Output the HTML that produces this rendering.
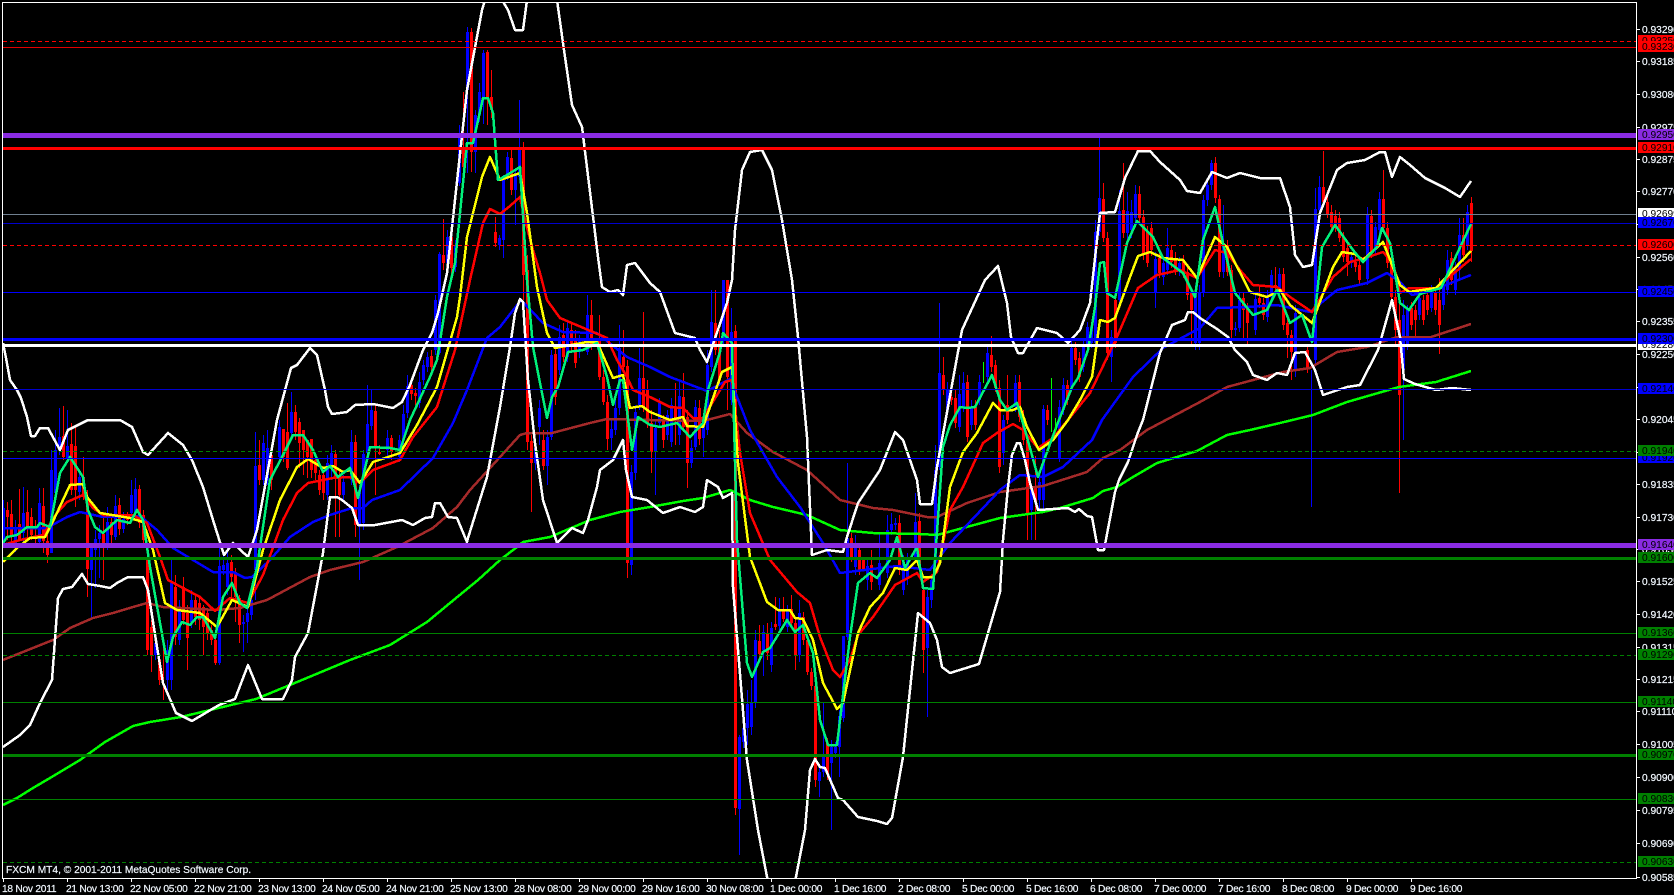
<!DOCTYPE html>
<html>
<head>
<meta charset="utf-8">
<title>FXCM MT4 chart</title>
<style>
html,body{margin:0;padding:0;background:#000;width:1674px;height:895px;overflow:hidden}
svg{display:block}
text{font-family:"Liberation Sans",sans-serif;font-size:10.2px}
.c{fill:none;stroke-width:2.5;shape-rendering:crispEdges;stroke-linejoin:round}
.w{fill:none;stroke-width:1;shape-rendering:crispEdges}
.b{fill:none;stroke-width:3;shape-rendering:crispEdges}
.h{shape-rendering:crispEdges;stroke-width:1}
.t text{fill:#f2f8ff;stroke:#f2f8ff;stroke-width:.2px}
.k{fill:#000}
</style>
</head>
<body>
<svg width="1674" height="895" viewBox="0 0 1674 895" xmlns="http://www.w3.org/2000/svg">
<defs><clipPath id="cp"><rect x="3" y="3" width="1633" height="875"/></clipPath></defs>
<rect width="1674" height="895" fill="#000"/>
<g clip-path="url(#cp)">
<!-- wicks -->
<path class="w" stroke="#0000ff" d="M3.5 500V548M15.5 520V552M23.5 487V543M39.5 488V545M51.5 450V553M55.5 430V500M59.5 408V455M67.5 410V462M79.5 470V500M91.5 545V618M95.5 530V588M99.5 525V578M107.5 507V550M115.5 495V540M123.5 512V533M131.5 480V518M135.5 478V518M155.5 635V660M167.5 640V690M171.5 560V690M179.5 600V645M191.5 590V628M219.5 540V665M223.5 553V575M227.5 545V595M243.5 615V652M247.5 605V643M251.5 590V620M255.5 432V600M263.5 435V485M267.5 430V485M279.5 420V462M291.5 392V440M327.5 455V500M331.5 445V480M343.5 475V500M351.5 430V485M359.5 485V580M363.5 450V530M367.5 385V458M371.5 390V430M387.5 430V458M399.5 435V462M403.5 405V445M407.5 375V418M419.5 372V408M423.5 360V385M427.5 352V372M435.5 295V355M439.5 252V355M447.5 230V268M455.5 240V272M459.5 125V186M467.5 27V173M475.5 110V173M479.5 83V122M483.5 50V124M499.5 235V250M503.5 175V258M507.5 152V180M515.5 168V225M519.5 100V180M535.5 445V470M539.5 400V445M547.5 430V485M551.5 350V440M559.5 325V375M567.5 322V362M579.5 335V358M587.5 295V355M611.5 420V450M615.5 400V435M619.5 325V415M631.5 465V575M635.5 405V480M639.5 348V410M655.5 420V495M659.5 398V428M667.5 410V440M671.5 398V447M679.5 382V445M691.5 440V468M695.5 400V450M703.5 420V457M707.5 350V435M711.5 290V372M723.5 290V345M731.5 308V405M739.5 735V855M743.5 720V748M747.5 690V745M751.5 680V735M755.5 630V708M763.5 625V676M771.5 622V672M779.5 598V630M787.5 605V632M799.5 600V662M819.5 768V797M823.5 703V777M831.5 740V830M835.5 742V758M839.5 710V777M843.5 683V722M847.5 463V640M855.5 535V575M867.5 560V590M879.5 533V590M887.5 515V578M891.5 513V535M895.5 518V530M903.5 555V595M907.5 553V585M915.5 493V562M927.5 590V717M931.5 575V608M935.5 445V560M939.5 303V470M947.5 382V415M959.5 375V432M963.5 372V412M971.5 400V430M979.5 375V405M987.5 347V382M1003.5 415V465M1015.5 375V412M1031.5 485V540M1039.5 478V510M1043.5 405V510M1059.5 400V462M1063.5 378V415M1071.5 340V392M1083.5 340V372M1087.5 322V350M1091.5 322V348M1095.5 220V348M1099.5 138V236M1111.5 330V382M1119.5 190V305M1127.5 192V240M1131.5 200V238M1135.5 185V224M1155.5 252V308M1163.5 258V285M1167.5 228V275M1179.5 257V276M1195.5 285V350M1199.5 285V350M1203.5 195V297M1207.5 178V206M1211.5 160V190M1223.5 205V278M1235.5 322V336M1239.5 292V332M1255.5 292V335M1267.5 290V322M1271.5 270V302M1279.5 268V298M1295.5 305V377M1311.5 370V507M1315.5 188V365M1319.5 176V215M1351.5 252V268M1367.5 207V285M1375.5 222V255M1379.5 192V236M1403.5 300V440M1407.5 305V350M1419.5 292V320M1431.5 285V312M1443.5 278V310M1447.5 250V295M1455.5 262V295M1459.5 218V280M1467.5 205V250"/>
<path class="w" stroke="#ff0000" d="M7.5 502V540M11.5 500V542M19.5 489V540M27.5 490V537M31.5 508V540M35.5 520V545M43.5 488V553M47.5 535V563M63.5 406V460M71.5 423V495M75.5 425V507M83.5 457V500M87.5 490V597M103.5 512V580M111.5 515V545M119.5 498V535M127.5 512V525M139.5 485V528M143.5 510V545M147.5 555V655M151.5 620V672M159.5 655V685M163.5 640V700M175.5 575V645M183.5 577V625M187.5 605V670M195.5 595V625M199.5 598V630M203.5 605V655M207.5 610V640M211.5 625V645M215.5 630V665M231.5 555V600M235.5 568V622M239.5 595V643M259.5 440V485M271.5 450V490M283.5 430V462M287.5 403V470M295.5 405V440M299.5 418V468M303.5 430V475M307.5 440V478M311.5 440V478M315.5 455V480M319.5 470V495M323.5 470V500M335.5 450V537M339.5 470V537M355.5 435V537M375.5 405V495M379.5 445V455M391.5 435V460M411.5 378V400M415.5 388V405M431.5 350V372M443.5 219V270M451.5 232V278M463.5 92V172M471.5 28V172M487.5 50V125M491.5 70V118M495.5 217V247M511.5 150V195M523.5 142V300M527.5 255V450M531.5 435V512M543.5 430V470M555.5 345V405M563.5 323V362M571.5 322V352M575.5 330V368M591.5 300V350M599.5 315V380M603.5 370V405M607.5 395V450M623.5 330V372M627.5 360V578M643.5 312V412M647.5 380V428M651.5 410V473M663.5 415V448M675.5 383V445M683.5 373V432M687.5 410V488M699.5 400V445M715.5 290V355M719.5 330V385M727.5 280V410M735.5 325V815M759.5 625V660M767.5 623V660M775.5 597V630M783.5 597V622M791.5 595V628M795.5 618V670M803.5 612V645M807.5 635V675M811.5 668V690M815.5 680V787M827.5 738V780M851.5 533V562M859.5 545V575M871.5 550V590M899.5 515V575M919.5 513V572M923.5 585V673M943.5 357V395M951.5 383V405M955.5 390V428M967.5 375V442M975.5 400V430M991.5 336V372M995.5 360V392M999.5 380V473M1007.5 375V424M1019.5 375V422M1023.5 410V445M1027.5 435V540M1035.5 456V540M1047.5 405V425M1067.5 380V405M1075.5 342V365M1079.5 352V382M1103.5 183V242M1107.5 232V360M1115.5 295V348M1123.5 163V238M1139.5 186V222M1143.5 210V260M1147.5 226V267M1151.5 222V256M1159.5 252V278M1171.5 245V268M1175.5 252V275M1183.5 255V278M1187.5 266V300M1191.5 288V345M1215.5 157V203M1219.5 195V277M1227.5 240V276M1231.5 265V342M1243.5 292V340M1247.5 303V345M1259.5 285V308M1263.5 298V320M1275.5 267V292M1283.5 268V330M1287.5 318V358M1291.5 330V380M1307.5 345V373M1323.5 151V206M1327.5 190V218M1331.5 205V232M1335.5 210V232M1339.5 212V242M1343.5 232V262M1347.5 243V276M1355.5 256V272M1359.5 260V285M1371.5 210V258M1383.5 170V232M1387.5 222V268M1391.5 256V302M1395.5 290V345M1399.5 300V493M1411.5 302V330M1415.5 305V340M1423.5 295V325M1427.5 290V315M1435.5 287V315M1439.5 278V354M1451.5 252V285M1463.5 218V262M1471.5 197V262"/>
<path class="w" stroke="#00ff00" d="M983.5 362V383M1051.5 378V432M1055.5 418V432"/>
<!-- bodies -->
<path class="b" stroke="#0000ff" d="M3.5 508V543M15.5 527V547M23.5 513V533M39.5 503V542M51.5 470V553M55.5 450V493M59.5 437V450M67.5 446V458M79.5 477V492M91.5 548V570M95.5 539V550M99.5 533V539M107.5 522V543M115.5 506V537M123.5 519V529M131.5 495V513M135.5 489V513M155.5 643V655M167.5 650V680M171.5 583V680M179.5 610V640M191.5 600V622M219.5 566V663M223.5 565V570M227.5 563V587M243.5 622V624M247.5 613V622M251.5 600V615M255.5 466V570M263.5 443V480M267.5 448V480M279.5 427V457M291.5 412V433M327.5 463V495M331.5 453V465M343.5 482V495M351.5 442V480M359.5 490V525M363.5 454V523M367.5 424V453M371.5 410V426M387.5 438V450M399.5 440V457M403.5 414V440M407.5 386V413M419.5 382V403M423.5 365V380M427.5 357V367M435.5 300V350M439.5 254V353M447.5 237V263M455.5 245V267M459.5 138V183M467.5 32V90M475.5 115V152M479.5 92V115M483.5 53V97M499.5 238V245M503.5 180V240M507.5 157V177M515.5 173V190M519.5 150V177M535.5 448V463M539.5 408V427M547.5 437V466M551.5 355V437M559.5 337V370M567.5 328V357M579.5 340V352M587.5 315V352M611.5 429V438M615.5 408V430M619.5 348V408M631.5 472V565M635.5 412V473M639.5 378V405M655.5 428V451M659.5 403V423M667.5 415V435M671.5 405V442M679.5 396V435M691.5 448V463M695.5 407V447M703.5 423V438M707.5 365V430M711.5 322V367M723.5 280V340M731.5 332V400M739.5 737V809M743.5 728V742M747.5 704V728M751.5 703V727M755.5 640V703M763.5 632V650M771.5 628V665M779.5 610V626M787.5 610V627M799.5 613V655M819.5 772V781M823.5 757V772M831.5 747V763M835.5 747V753M839.5 716V747M843.5 636V718M847.5 538V637M855.5 547V567M867.5 566V580M879.5 563V585M887.5 530V573M891.5 524V530M895.5 523V525M903.5 563V590M907.5 560V577M915.5 522V557M927.5 597V648M931.5 580V600M935.5 470V557M939.5 373V467M947.5 390V410M959.5 394V427M963.5 383V407M971.5 407V425M979.5 382V400M987.5 353V377M1003.5 420V453M1015.5 383V407M1031.5 490V510M1039.5 482V500M1043.5 409V500M1059.5 407V458M1063.5 385V410M1071.5 348V387M1083.5 347V367M1087.5 327V347M1091.5 327V343M1095.5 232V343M1099.5 198V232M1111.5 337V357M1119.5 211V300M1127.5 211V233M1131.5 212V230M1135.5 194V218M1155.5 259V293M1163.5 263V277M1167.5 248V270M1179.5 263V270M1195.5 293V343M1199.5 293V343M1203.5 200V293M1207.5 185V200M1211.5 163V185M1223.5 243V272M1235.5 328V330M1239.5 300V328M1255.5 299V330M1267.5 297V317M1271.5 275V297M1279.5 274V292M1295.5 313V370M1315.5 209V360M1319.5 187V210M1351.5 257V263M1367.5 215V279M1375.5 227V250M1379.5 199V230M1403.5 315V370M1407.5 310V345M1419.5 298V315M1431.5 292V308M1443.5 285V305M1447.5 260V290M1455.5 270V290M1459.5 235V270M1467.5 212V245"/>
<path class="b" stroke="#ff0000" d="M7.5 510V517M11.5 514V537M19.5 524V540M27.5 512V528M31.5 517V535M43.5 506V541M47.5 541V555M63.5 436V457M71.5 444V490M75.5 446V490M83.5 477V497M87.5 497V569M103.5 534V543M111.5 522V535M119.5 505V529M127.5 518V520M139.5 489V523M143.5 515V540M147.5 560V650M151.5 627V655M159.5 660V680M175.5 587V637M183.5 587V620M187.5 613V638M195.5 600V617M199.5 603V620M203.5 607V627M207.5 613V633M211.5 630V640M215.5 640V663M231.5 562V577M235.5 572V597M239.5 598V625M259.5 465V480M271.5 455V480M283.5 429V457M287.5 432V468M295.5 412V432M299.5 422V443M303.5 430V450M307.5 440V457M311.5 439V470M315.5 460V473M319.5 475V490M323.5 475V493M335.5 454V477M339.5 477V495M355.5 442V525M375.5 411V448M379.5 452V454M391.5 438V452M411.5 385V394M415.5 393V396M431.5 356V367M443.5 255V263M451.5 237V268M463.5 147V167M471.5 32V152M487.5 52V98M491.5 97V110M495.5 232V243M511.5 158V190M523.5 150V275M527.5 270V442M531.5 441V463M543.5 440V466M555.5 354V397M563.5 335V357M571.5 330V347M575.5 338V363M591.5 315V345M599.5 338V377M603.5 377V402M607.5 402V439M623.5 357V367M627.5 366V563M643.5 378V407M647.5 390V423M651.5 423V452M663.5 420V440M675.5 407V420M683.5 397V427M687.5 417V463M699.5 408V439M715.5 323V350M719.5 340V380M727.5 280V377M735.5 331V808M759.5 641V654M767.5 634V653M775.5 624V627M783.5 610V619M791.5 609V623M795.5 623V655M803.5 617V640M807.5 640V672M811.5 672V686M815.5 686V780M827.5 743V774M851.5 538V557M859.5 550V570M863.5 560V570M871.5 565V582M899.5 523V570M919.5 521V567M923.5 590V650M943.5 375V390M951.5 397V400M955.5 398V423M967.5 382V437M975.5 407V425M991.5 355V367M995.5 365V388M999.5 388V467M1007.5 405V420M1019.5 382V417M1023.5 417V440M1027.5 440V515M1035.5 488V502M1047.5 410V420M1067.5 385V400M1075.5 348V360M1079.5 358V377M1103.5 199V238M1107.5 238V353M1115.5 300V343M1123.5 210V233M1139.5 194V218M1143.5 217V255M1147.5 232V263M1151.5 228V250M1159.5 258V273M1171.5 250V262M1175.5 258V270M1183.5 260V273M1187.5 272V295M1191.5 293V310M1215.5 163V198M1219.5 199V272M1227.5 245V272M1231.5 270V330M1243.5 298V310M1247.5 307V323M1259.5 298V303M1263.5 303V315M1275.5 285V287M1283.5 274V325M1287.5 323V335M1291.5 335V352M1307.5 350V368M1323.5 187V202M1327.5 202V215M1331.5 212V227M1335.5 216V227M1339.5 218V238M1343.5 237V257M1347.5 248V262M1355.5 262V267M1359.5 265V280M1371.5 216V253M1383.5 199V228M1387.5 228V263M1391.5 262V297M1395.5 297V330M1399.5 320V395M1411.5 308V325M1415.5 310V320M1423.5 300V320M1427.5 295V310M1435.5 292V310M1439.5 300V325M1451.5 258V280M1463.5 235V255M1471.5 203V251"/>
<!-- brown -->
<polyline class="c" stroke="#a52a2a" points="3,660 53,640 70,628 93,618 113,613 133,607 147,603 163,607 217,610 240,608 267,600 310,577 330,570 363,562 397,547 433,528 457,507 470,490 520,435 527,433 552,433 590,423 607,419 650,420 703,421 730,414 747,433 773,452 807,470 840,500 873,508 893,510 927,517 937,517 967,503 1000,492 1043,486 1087,472 1103,458 1120,450 1147,430 1200,402 1227,387 1283,372 1310,368 1337,352 1367,347 1397,337 1431,337 1471,324"/>
<!-- green 200 -->
<polyline class="c" stroke="#00ff00" points="3,805 17,798 33,788 50,778 80,760 105,742 133,726 150,722 181,717 256,699 302,680 350,660 390,645 427,622 450,603 478,580 500,560 517,547 523,542 550,537 590,520 620,512 650,507 683,501 703,498 730,490 750,500 773,507 807,515 840,530 873,533 920,534 937,535 963,528 1000,518 1043,512 1060,508 1093,498 1103,491 1117,487 1133,477 1157,463 1197,451 1227,435 1250,430 1280,423 1313,415 1347,402 1399,387 1436,382 1471,371"/>
<!-- blue ema -->
<polyline class="c" stroke="#0000ff" points="3,528 47,528 67,517 80,512 103,517 140,516 157,530 173,548 193,560 213,572 233,572 245,578 252,577 270,560 290,537 313,522 330,515 352,508 363,508 372,500 400,490 433,458 453,423 467,390 487,338 500,327 521,300 543,323 563,332 597,333 627,357 650,367 670,377 707,391 730,379 750,430 777,477 800,507 823,543 840,573 897,566 930,570 950,543 1000,490 1020,475 1043,477 1063,467 1092,440 1102,420 1133,377 1163,348 1200,328 1217,308 1247,307 1277,305 1310,312 1337,290 1367,283 1387,273 1400,282 1412,295 1431,291 1471,275"/>
<!-- red ema -->
<polyline class="c" stroke="#ff0000" points="3,545 20,540 43,535 57,513 67,502 83,495 93,508 103,515 133,515 147,523 160,557 168,580 183,588 200,597 215,611 230,598 248,603 263,575 283,520 297,493 308,483 333,478 350,477 360,483 373,470 400,460 413,437 437,407 455,350 470,280 483,223 490,209 500,214 510,206 520,197 525,220 533,250 540,273 547,300 560,318 593,332 607,338 617,360 627,377 633,390 650,397 670,407 683,408 693,418 703,418 725,382 732,380 740,453 750,513 770,560 797,592 810,603 820,637 833,670 840,677 850,660 858,635 873,617 895,585 917,573 923,582 937,572 950,510 963,487 983,443 997,433 1013,424 1023,430 1038,448 1053,438 1072,415 1090,393 1117,337 1138,288 1157,275 1180,270 1197,278 1215,250 1227,253 1240,270 1253,285 1277,287 1290,297 1312,312 1333,277 1350,262 1365,258 1383,252 1393,263 1400,293 1409,288 1436,288 1471,259"/>
<!-- yellow -->
<polyline class="c" stroke="#ffff00" points="3,562 17,548 30,538 45,537 55,517 70,485 83,484 87,497 100,513 130,518 143,522 153,550 165,603 177,610 200,613 217,627 232,600 248,607 263,550 280,500 297,467 308,459 323,468 333,466 343,472 350,470 360,483 373,462 400,453 417,425 437,387 457,317 460,297 467,237 482,177 490,157 500,180 520,173 527,213 537,287 547,333 555,348 587,342 597,342 613,378 623,375 630,408 642,406 650,412 670,420 683,417 687,426 703,427 722,372 732,367 738,463 750,557 767,602 778,610 790,610 795,618 803,619 813,640 823,683 837,709 843,703 858,633 870,607 883,593 895,568 907,570 917,560 923,577 933,577 940,563 950,487 963,452 977,433 993,403 1000,410 1013,410 1020,407 1027,427 1039,450 1053,440 1068,420 1080,400 1092,377 1100,320 1108,322 1115,318 1130,277 1138,256 1150,252 1163,258 1183,260 1197,278 1215,237 1227,247 1250,292 1267,297 1280,290 1290,305 1312,323 1333,267 1342,252 1355,254 1363,260 1383,242 1400,285 1409,292 1436,288 1471,251"/>
<!-- spring green -->
<polyline class="c" stroke="#00f07a" points="3,543 7,537 17,535 27,527 37,527 40,523 50,527 60,473 70,457 83,477 88,510 95,527 103,533 117,520 130,523 137,510 143,520 150,567 167,662 173,637 182,622 190,625 197,617 203,617 215,638 223,597 232,583 240,603 247,608 257,567 270,480 283,455 293,435 303,435 313,450 323,472 330,466 338,477 350,468 358,498 370,447 390,448 400,450 410,420 430,377 437,360 447,297 455,263 467,143 473,143 483,98 488,98 493,113 498,180 507,175 520,167 527,280 533,347 540,383 547,418 552,397 558,387 568,352 583,350 597,343 607,377 613,405 620,380 623,380 632,450 638,417 650,425 660,427 677,423 690,437 703,423 708,390 720,352 723,333 732,343 737,540 740,577 747,663 752,677 763,652 770,648 787,620 795,632 803,625 813,653 820,720 828,745 837,745 850,637 858,583 870,573 877,578 890,560 897,537 905,568 917,547 923,588 933,589 943,447 950,425 960,407 967,408 975,407 992,375 1000,400 1007,410 1017,403 1025,430 1038,477 1043,463 1057,425 1072,387 1078,378 1088,350 1095,307 1100,263 1104,262 1107,293 1115,298 1127,243 1137,221 1153,237 1163,258 1183,273 1195,297 1203,240 1215,207 1223,243 1235,293 1253,315 1267,310 1277,290 1290,323 1302,315 1312,342 1322,247 1335,225 1353,250 1363,262 1377,247 1382,228 1390,243 1400,303 1409,310 1420,294 1441,288 1471,224"/>
<!-- white upper band -->
<polyline class="c" stroke="#ffffff" points="3,343 6,358 10,380 17,390 21,398 27,417 31,436 35,436 40,428 48,428 60,450 68,430 88,420 120,420 132,427 143,452 148,455 168,433 183,445 192,460 203,487 213,520 224,555 233,543 248,557 257,530 277,420 291,368 297,365 310,348 317,355 325,390 328,407 332,414 340,413 347,412 355,405 373,404 393,408 402,402 410,385 423,350 432,333 438,313 447,273 467,90 482,10 485,0 502,0 508,10 515,30 523,30 527,0 557,0 563,43 572,105 582,127 598,257 602,287 610,292 618,290 623,295 627,265 635,263 650,283 660,292 675,333 695,338 700,350 707,362 727,303 732,280 735,230 742,170 750,152 762,150 772,170 782,220 792,280 798,337 807,437 812,555 827,550 843,552 847,537 858,503 880,470 895,432 903,440 917,480 920,504 932,504 937,467 962,330 985,280 998,266 1007,303 1011,337 1018,353 1023,353 1037,328 1057,333 1068,343 1080,330 1090,303 1100,213 1115,212 1125,178 1138,151 1150,151 1160,162 1180,180 1187,191 1200,193 1212,172 1227,178 1240,173 1260,178 1280,178 1290,207 1295,255 1303,267 1312,265 1320,213 1337,170 1347,163 1365,160 1380,152 1385,152 1392,177 1400,157 1410,165 1425,178 1445,188 1460,197 1471,181"/>
<!-- white lower band -->
<polyline class="c" stroke="#ffffff" points="3,747 20,735 30,725 40,703 52,680 58,598 63,589 72,587 82,574 88,584 100,586 110,588 117,583 128,577 143,577 148,590 157,647 163,683 176,713 192,721 219,705 235,699 248,665 262,699 283,699 292,680 295,657 308,633 318,580 323,553 330,497 337,497 342,500 352,508 358,525 375,525 402,520 413,525 425,518 432,517 435,503 440,503 448,517 457,518 467,542 468,538 487,477 500,407 510,347 515,313 520,299 523,302 528,380 535,443 543,500 557,543 563,537 572,528 583,533 588,520 597,487 600,470 613,460 623,440 626,470 632,497 647,500 663,513 680,507 695,512 703,507 707,480 718,487 723,498 732,493 733,587 737,637 747,760 758,830 768,882 795,882 805,830 810,770 815,759 820,767 825,768 838,798 843,800 858,817 877,821 887,824 892,818 903,757 918,613 930,623 937,640 942,667 950,673 979,664 1000,592 1003,540 1008,487 1012,455 1017,443 1020,443 1025,460 1030,483 1038,510 1068,508 1075,512 1079,509 1087,516 1092,517 1098,550 1104,550 1115,492 1119,480 1128,462 1137,435 1143,420 1160,353 1172,325 1185,320 1188,312 1193,312 1200,318 1217,329 1228,337 1235,350 1247,362 1253,375 1267,380 1277,373 1287,375 1295,353 1305,352 1315,370 1323,395 1347,387 1360,385 1378,350 1392,300 1400,337 1404,379 1415,384 1436,390 1452,388 1471,390"/>
<!-- candle-coloured doji wick -->
<path class="w" stroke="#00ff00" d="M983.5 362V383M1051.5 378V432M1055.5 418V432"/>
<!-- horizontal lines -->
<g class="h">
<line x1="3" x2="1636" y1="41.5" y2="41.5" stroke="#ff0000" stroke-dasharray="4 3"/>
<line x1="3" x2="1636" y1="47.5" y2="47.5" stroke="#e00000"/>
<rect x="3" y="133" width="1633" height="5" fill="#8a2be2"/>
<rect x="3" y="147" width="1633" height="3" fill="#ff0000"/>
<line x1="3" x2="1636" y1="214.5" y2="214.5" stroke="#708090"/>
<line x1="3" x2="1636" y1="223.5" y2="223.5" stroke="#0000cd"/>
<line x1="3" x2="1636" y1="245.5" y2="245.5" stroke="#ff0000" stroke-dasharray="4 3"/>
<line x1="3" x2="1636" y1="292.5" y2="292.5" stroke="#0000ff"/>
<rect x="3" y="338" width="1633" height="3" fill="#0000ff"/>
<rect x="3" y="344" width="1633" height="3" fill="#ffffff"/>
<line x1="3" x2="1636" y1="389.5" y2="389.5" stroke="#0000cd"/>
<line x1="3" x2="1636" y1="451.5" y2="451.5" stroke="#008000" stroke-dasharray="4 3"/>
<line x1="3" x2="1636" y1="458.5" y2="458.5" stroke="#0000ff"/>
<rect x="3" y="543" width="1633" height="5" fill="#8a2be2"/>
<rect x="3" y="557" width="1633" height="3" fill="#008000"/>
<line x1="3" x2="1636" y1="633.5" y2="633.5" stroke="#008000"/>
<line x1="3" x2="1636" y1="655.5" y2="655.5" stroke="#008000" stroke-dasharray="4 3"/>
<line x1="3" x2="1636" y1="702.5" y2="702.5" stroke="#008000"/>
<rect x="3" y="754" width="1633" height="3" fill="#008000"/>
<line x1="3" x2="1636" y1="799.5" y2="799.5" stroke="#008000"/>
<line x1="3" x2="1636" y1="862.5" y2="862.5" stroke="#008000" stroke-dasharray="4 3"/>
</g>
</g>
<!-- frame -->
<g fill="#fff" shape-rendering="crispEdges">
<rect x="2" y="2" width="1635" height="1"/>
<rect x="2" y="2" width="1" height="877"/>
<rect x="1636" y="2" width="1" height="877"/>
<rect x="2" y="878" width="1635" height="1"/>
<path d="M1637 29h3v1h-3zM1637 61h3v1h-3zM1637 94h3v1h-3zM1637 127h3v1h-3zM1637 159h3v1h-3zM1637 191h3v1h-3zM1637 224h3v1h-3zM1637 257h3v1h-3zM1637 289h3v1h-3zM1637 321h3v1h-3zM1637 354h3v1h-3zM1637 387h3v1h-3zM1637 419h3v1h-3zM1637 452h3v1h-3zM1637 484h3v1h-3zM1637 517h3v1h-3zM1637 549h3v1h-3zM1637 581h3v1h-3zM1637 614h3v1h-3zM1637 647h3v1h-3zM1637 679h3v1h-3zM1637 711h3v1h-3zM1637 744h3v1h-3zM1637 777h3v1h-3zM1637 810h3v1h-3zM1637 843h3v1h-3zM1637 877h3v1h-3z"/>
<path d="M3 879h1v3h-1zM67 879h1v3h-1zM131 879h1v3h-1zM195 879h1v3h-1zM259 879h1v3h-1zM323 879h1v3h-1zM387 879h1v3h-1zM451 879h1v3h-1zM515 879h1v3h-1zM579 879h1v3h-1zM643 879h1v3h-1zM707 879h1v3h-1zM771 879h1v3h-1zM835 879h1v3h-1zM899 879h1v3h-1zM963 879h1v3h-1zM1027 879h1v3h-1zM1091 879h1v3h-1zM1155 879h1v3h-1zM1219 879h1v3h-1zM1283 879h1v3h-1zM1347 879h1v3h-1zM1411 879h1v3h-1z"/>
</g>
<!-- tick price labels -->
<g class="t">
<text x="1642" y="33">0.93290</text>
<text x="1642" y="65">0.93185</text>
<text x="1642" y="98">0.93080</text>
<text x="1642" y="131">0.92975</text>
<text x="1642" y="163">0.92875</text>
<text x="1642" y="195">0.92770</text>
<text x="1642" y="261">0.92560</text>
<text x="1642" y="293">0.92455</text>
<text x="1642" y="325">0.92355</text>
<text x="1642" y="358">0.92250</text>
<text x="1642" y="423">0.92045</text>
<text x="1642" y="488">0.91835</text>
<text x="1642" y="521">0.91730</text>
<text x="1642" y="553">0.91630</text>
<text x="1642" y="585">0.91525</text>
<text x="1642" y="618">0.91420</text>
<text x="1642" y="651">0.91315</text>
<text x="1642" y="683">0.91215</text>
<text x="1642" y="715">0.91110</text>
<text x="1642" y="748">0.91005</text>
<text x="1642" y="781">0.90900</text>
<text x="1642" y="814">0.90795</text>
<text x="1642" y="847">0.90690</text>
<text x="1642" y="881">0.90585</text>
</g>
<!-- price boxes -->
<g shape-rendering="crispEdges">
<rect x="1638" y="35" width="36" height="11" fill="#f00"/><text class="k" x="1642" y="44">0.93250</text>
<rect x="1638" y="41" width="36" height="11" fill="#f00"/><text class="k" x="1642" y="50">0.93230</text>
<rect x="1638" y="129" width="36" height="11" fill="#8a2be2"/><text class="k" x="1642" y="138">0.92950</text>
<rect x="1638" y="142" width="36" height="11" fill="#f00"/><text class="k" x="1642" y="151">0.92910</text>
<rect x="1638" y="208" width="36" height="11" fill="#fff"/><text class="k" x="1642" y="217">0.92699</text>
<rect x="1638" y="217" width="36" height="11" fill="#00f"/><text class="k" x="1642" y="226">0.92670</text>
<rect x="1638" y="239" width="36" height="11" fill="#f00"/><text class="k" x="1642" y="248">0.92600</text>
<rect x="1638" y="286" width="36" height="11" fill="#00f"/><text class="k" x="1642" y="295">0.92450</text>
<rect x="1638" y="339" width="36" height="11" fill="#fff"/><text class="k" x="1642" y="348">0.92280</text>
<rect x="1638" y="333" width="36" height="11" fill="#00f"/><text class="k" x="1642" y="342">0.92300</text>
<rect x="1638" y="383" width="36" height="11" fill="#00f"/><text class="k" x="1642" y="392">0.92140</text>
<rect x="1638" y="452" width="36" height="11" fill="#00f"/><text class="k" x="1642" y="461">0.91920</text>
<rect x="1638" y="445" width="36" height="11" fill="#008000"/><text class="k" x="1642" y="454">0.91940</text>
<rect x="1638" y="539" width="36" height="11" fill="#8a2be2"/><text class="k" x="1642" y="548">0.91640</text>
<rect x="1638" y="552" width="36" height="11" fill="#008000"/><text class="k" x="1642" y="561">0.91600</text>
<rect x="1638" y="627" width="36" height="11" fill="#008000"/><text class="k" x="1642" y="636">0.91360</text>
<rect x="1638" y="649" width="36" height="11" fill="#008000"/><text class="k" x="1642" y="658">0.91290</text>
<rect x="1638" y="696" width="36" height="11" fill="#008000"/><text class="k" x="1642" y="705">0.91140</text>
<rect x="1638" y="749" width="36" height="11" fill="#008000"/><text class="k" x="1642" y="758">0.90970</text>
<rect x="1638" y="793" width="36" height="11" fill="#008000"/><text class="k" x="1642" y="802">0.90830</text>
<rect x="1638" y="856" width="36" height="11" fill="#008000"/><text class="k" x="1642" y="865">0.90630</text>
</g>
<!-- copyright -->
<g class="t"><text x="6" y="873">FXCM MT4, © 2001-2011 MetaQuotes Software Corp.</text></g>
<!-- dates -->
<g class="t" letter-spacing="-0.25">
<text x="2" y="892">18 Nov 2011</text>
<text x="66" y="892">21 Nov 13:00</text>
<text x="130" y="892">22 Nov 05:00</text>
<text x="194" y="892">22 Nov 21:00</text>
<text x="258" y="892">23 Nov 13:00</text>
<text x="322" y="892">24 Nov 05:00</text>
<text x="386" y="892">24 Nov 21:00</text>
<text x="450" y="892">25 Nov 13:00</text>
<text x="514" y="892">28 Nov 08:00</text>
<text x="578" y="892">29 Nov 00:00</text>
<text x="642" y="892">29 Nov 16:00</text>
<text x="706" y="892">30 Nov 08:00</text>
<text x="770" y="892">1 Dec 00:00</text>
<text x="834" y="892">1 Dec 16:00</text>
<text x="898" y="892">2 Dec 08:00</text>
<text x="962" y="892">5 Dec 00:00</text>
<text x="1026" y="892">5 Dec 16:00</text>
<text x="1090" y="892">6 Dec 08:00</text>
<text x="1154" y="892">7 Dec 00:00</text>
<text x="1218" y="892">7 Dec 16:00</text>
<text x="1282" y="892">8 Dec 08:00</text>
<text x="1346" y="892">9 Dec 00:00</text>
<text x="1410" y="892">9 Dec 16:00</text>
</g>
</svg>
</body>
</html>
